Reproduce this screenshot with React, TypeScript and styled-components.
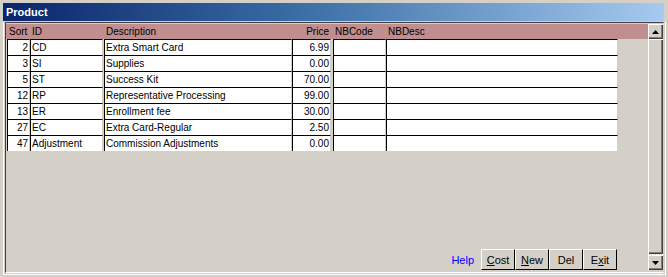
import React from "react";
import styled, { createGlobalStyle } from "styled-components";

const GlobalStyle = createGlobalStyle`
  html, body {
    margin: 0;
    padding: 0;
    background: #d4d0c8;
  }
  body {
    font-family: "Liberation Sans", Arial, sans-serif;
    font-size: 10px;
    color: #000;
  }
`;

type Align = "left" | "right";

interface Column {
  key: string;
  label: string;
  width: number;
  gap: number;
  align: Align;
  headAlign: Align;
}

const columns: Column[] = [
  { key: "sort", label: "Sort", width: 23, gap: 0, align: "right", headAlign: "left" },
  { key: "id", label: "ID", width: 73, gap: 0, align: "left", headAlign: "left" },
  { key: "desc", label: "Description", width: 188, gap: 1, align: "left", headAlign: "left" },
  { key: "price", label: "Price", width: 39, gap: 0, align: "right", headAlign: "right" },
  { key: "nbcode", label: "NBCode", width: 53, gap: 2, align: "left", headAlign: "left" },
  { key: "nbdesc", label: "NBDesc", width: 232, gap: 0, align: "left", headAlign: "left" },
];

const products: Record<string, string>[] = [
  { sort: "2", id: "CD", desc: "Extra Smart Card", price: "6.99", nbcode: "", nbdesc: "" },
  { sort: "3", id: "SI", desc: "Supplies", price: "0.00", nbcode: "", nbdesc: "" },
  { sort: "5", id: "ST", desc: "Success Kit", price: "70.00", nbcode: "", nbdesc: "" },
  { sort: "12", id: "RP", desc: "Representative Processing", price: "99.00", nbcode: "", nbdesc: "" },
  { sort: "13", id: "ER", desc: "Enrollment fee", price: "30.00", nbcode: "", nbdesc: "" },
  { sort: "27", id: "EC", desc: "Extra Card-Regular", price: "2.50", nbcode: "", nbdesc: "" },
  { sort: "47", id: "Adjustment", desc: "Commission Adjustments", price: "0.00", nbcode: "", nbdesc: "" },
];

const Window = styled.div`
  width: 668px;
  height: 277px;
  box-sizing: border-box;
  padding: 3px 2px 2px 3px;
  display: flex;
  flex-direction: column;
  background: #d4d0c8;
`;

const TitleBar = styled.div`
  height: 18px;
  margin-right: 2px;
  display: flex;
  align-items: center;
  padding-left: 3px;
  background: linear-gradient(90deg, #0a246a 0%, #3a6ea5 45%, #a6caf0 100%);
  color: #fff;
  font-weight: bold;
  font-size: 11px;
`;

const Frame = styled.div`
  flex: 1;
  margin-top: 1px;
  display: flex;
  padding: 0 1px 1px 1px;
  border-left: 1px solid #fff;
  border-right: 1px solid #fff;
  border-bottom: 1px solid #fff;
`;

const Sunken = styled.div`
  flex: 1;
  display: flex;
  padding: 1px 0 1px 0;
  border-top: 1px solid #404040;
  border-left: 1px solid #404040;
  border-bottom: 1px solid #fff;
  border-right: 1px solid #d4d0c8;
`;

const GridArea = styled.div`
  flex: 1;
  display: flex;
  flex-direction: column;
`;

const HeaderRow = styled.div`
  height: 15px;
  display: flex;
  padding-left: 1px;
  background: #c08e8e;
`;

const HeadCell = styled.div<{ $width: number; $gap: number; $align: Align }>`
  width: ${(p) => p.$width}px;
  margin-left: ${(p) => p.$gap}px;
  box-sizing: border-box;
  padding: 0 2px 0 2px;
  text-align: ${(p) => p.$align};
  line-height: 15px;
  white-space: nowrap;
`;

const Row = styled.div`
  height: 16px;
  display: flex;
  padding-left: 1px;
`;

const Cell = styled.div<{ $width: number; $gap: number; $align: Align }>`
  width: ${(p) => p.$width}px;
  margin-left: ${(p) => p.$gap}px;
  box-sizing: border-box;
  background: #fff;
  border-top: 1px solid #000;
  border-left: 1px solid #000;
  border-right: 1px solid #d4d0c8;
  padding: 0 1px;
  text-align: ${(p) => p.$align};
  line-height: 15px;
  white-space: nowrap;
  overflow: hidden;
`;

const Footer = styled.div`
  margin-top: auto;
  display: flex;
  align-items: center;
  justify-content: flex-end;
  padding: 0 31px 1px 0;
`;

const HelpLink = styled.span`
  color: #0000ff;
  font-size: 11px;
  margin-right: 7px;
`;

const Button = styled.button`
  width: 34px;
  height: 21px;
  box-sizing: border-box;
  padding: 0;
  margin: 0;
  background: #d4d0c8;
  border-style: solid;
  border-width: 1px;
  border-color: #fff #000 #000 #fff;
  font-family: "Liberation Sans", Arial, sans-serif;
  font-size: 11px;
  color: #000;
`;

const ScrollBar = styled.div`
  width: 15px;
  display: flex;
  flex-direction: column;
  padding-bottom: 1px;
`;

const ScrollButton = styled.div`
  height: 15px;
  box-sizing: border-box;
  display: flex;
  align-items: center;
  justify-content: center;
  background: #d4d0c8;
  box-shadow: inset 1px 1px #fff, inset -1px -1px #404040, inset -2px -2px #808080;
`;

const Thumb = styled.div`
  flex: 1;
  background: #d4d0c8;
  box-shadow: inset 1px 1px #fff, inset -1px -1px #404040, inset -2px -2px #808080;
`;

const Track = styled.div`
  height: 1px;
  background: repeating-linear-gradient(90deg, #fff 0 1px, #d4d0c8 1px 2px);
`;

const Arrow = ({ down }: { down?: boolean }) => (
  <svg width="7" height="4" viewBox="0 0 7 4">
    {down ? <polygon points="0,0 7,0 3.5,4" fill="#000" /> : <polygon points="0,4 7,4 3.5,0" fill="#000" />}
  </svg>
);

export default function App() {
  return (
    <>
      <GlobalStyle />
      <Window>
        <TitleBar>Product</TitleBar>
        <Frame>
          <Sunken>
            <GridArea>
              <HeaderRow>
                {columns.map((c) => (
                  <HeadCell key={c.key} $width={c.width} $gap={c.gap} $align={c.headAlign}>
                    {c.label}
                  </HeadCell>
                ))}
              </HeaderRow>
              {products.map((p) => (
                <Row key={p.sort}>
                  {columns.map((c) => (
                    <Cell key={c.key} $width={c.width} $gap={c.gap} $align={c.align}>
                      {p[c.key]}
                    </Cell>
                  ))}
                </Row>
              ))}
              <Footer>
                <HelpLink>Help</HelpLink>
                <Button>
                  <u>C</u>ost
                </Button>
                <Button>
                  <u>N</u>ew
                </Button>
                <Button>Del</Button>
                <Button>
                  E<u>x</u>it
                </Button>
              </Footer>
            </GridArea>
            <ScrollBar>
              <ScrollButton>
                <Arrow />
              </ScrollButton>
              <Thumb />
              <Track />
              <ScrollButton>
                <Arrow down />
              </ScrollButton>
            </ScrollBar>
          </Sunken>
        </Frame>
      </Window>
    </>
  );
}
